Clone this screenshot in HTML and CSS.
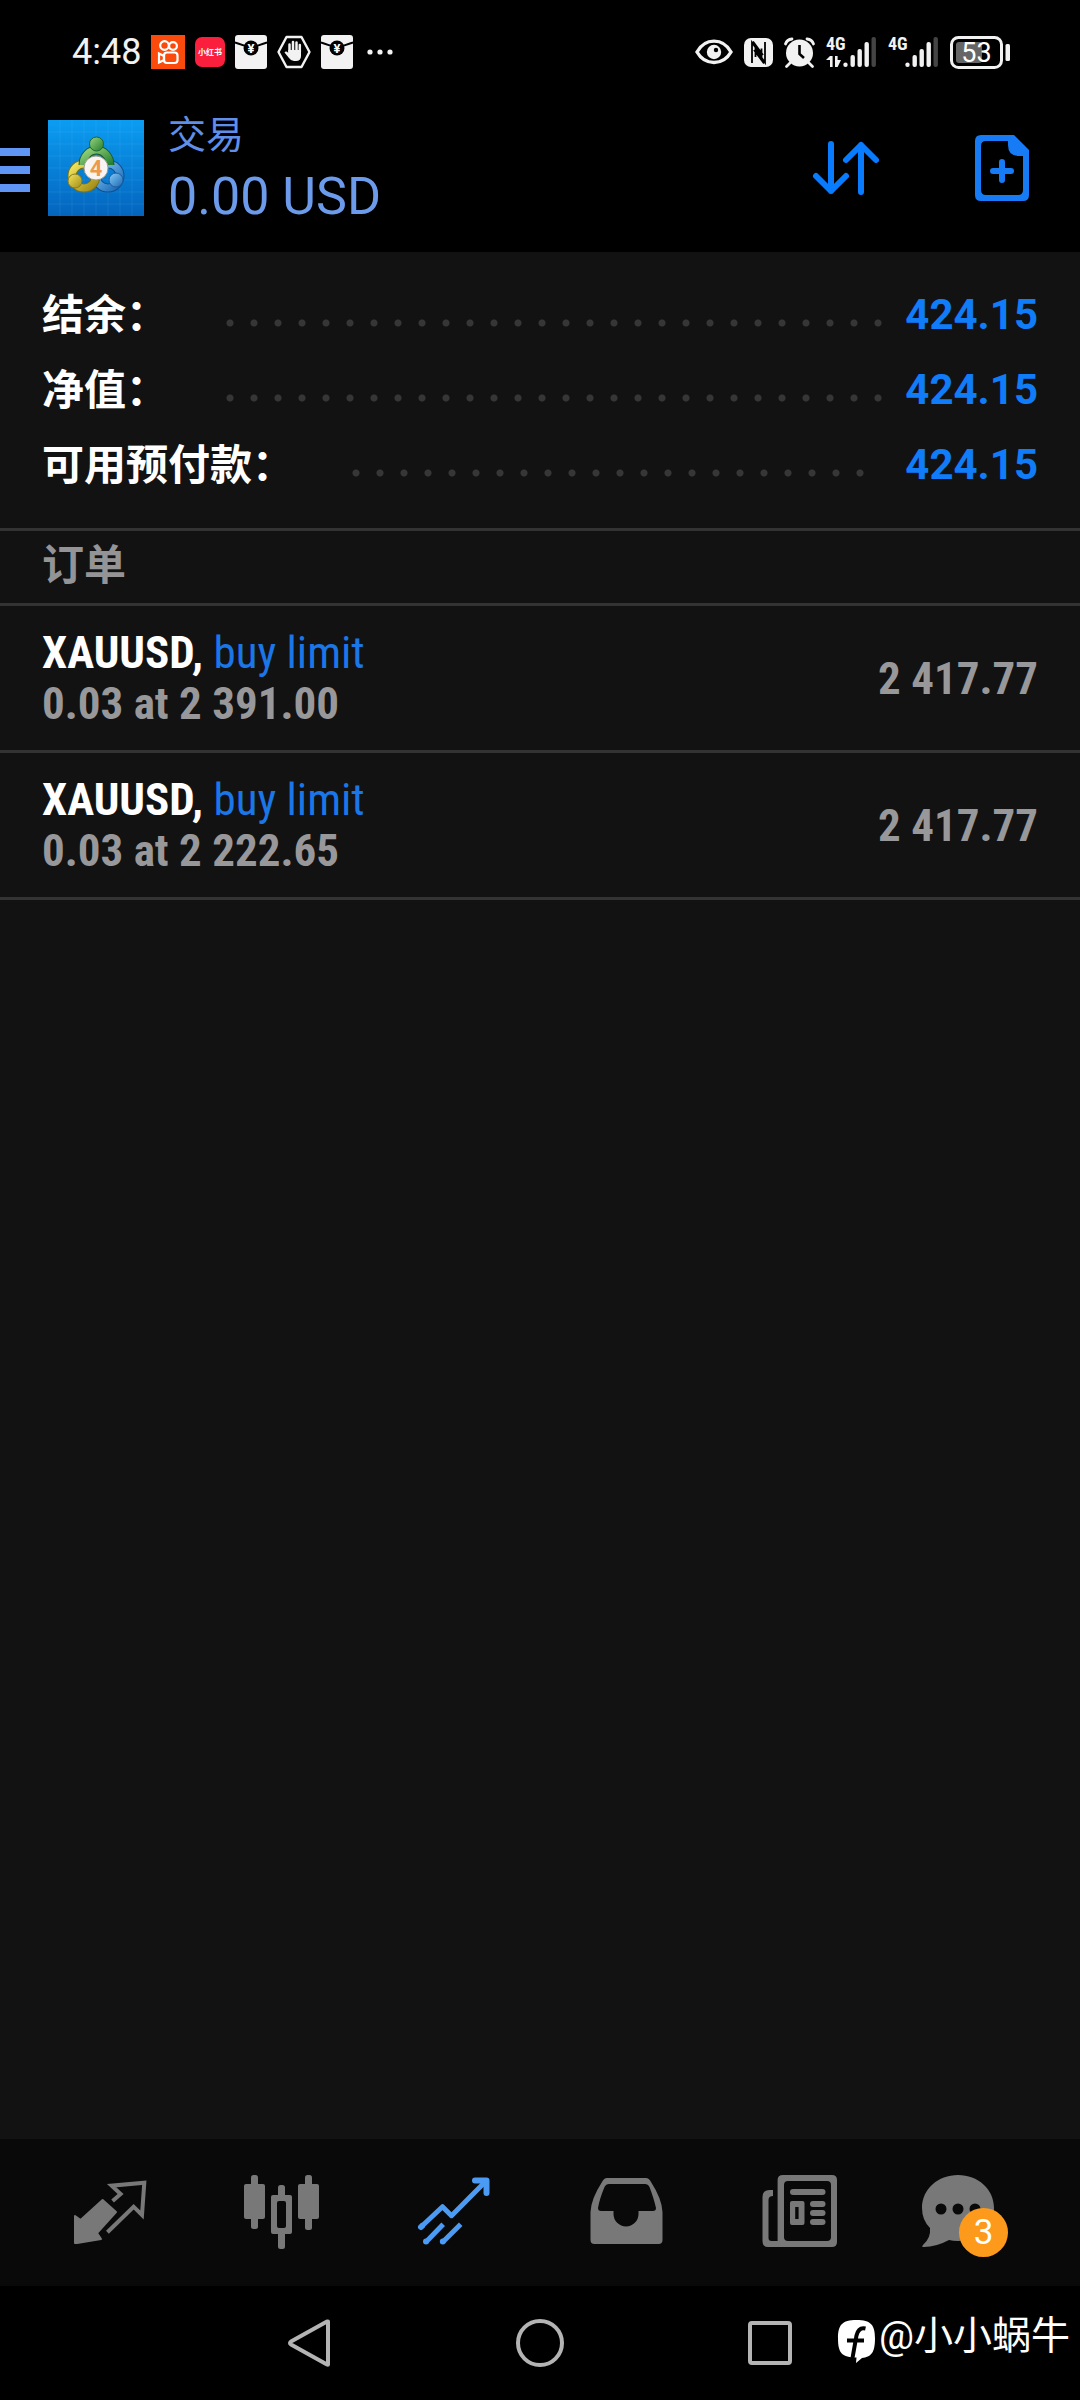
FILE: index.html
```html
<!DOCTYPE html>
<html lang="zh-CN">
<head>
<meta charset="utf-8">
<meta name="viewport" content="width=device-width, initial-scale=1">
<title>交易</title>
<link rel="stylesheet" href="styles.css">
</head>
<body>
<div class="screen">
  <div class="status">
    <div class="status-group">
      <span class="clock">4:48</span>
      <svg width="34" height="34" viewBox="0 0 34 34" aria-hidden="true">
        <rect width="34" height="34" fill="#fa4b0c"/>
        <g fill="none" stroke="#fff" stroke-width="2.2"><circle cx="13.5" cy="10.5" r="4.3"/><circle cx="22" cy="11" r="3.9"/><rect x="13" y="17.5" width="13.5" height="10.5" rx="3"/><path d="M13 21 8 18.500v9L13 25z"/></g>
      </svg>
      <svg width="30" height="30" viewBox="0 0 30 30" aria-hidden="true">
        <rect width="30" height="30" rx="7" fill="#fb1f3e"/>
        <text x="15" y="18" class="tiny-label">小红书</text>
      </svg>
      <svg width="32" height="34" viewBox="0 0 32 34" aria-hidden="true">
        <rect width="32" height="34" rx="3" fill="#f2f2f2"/><path d="M0 7.500C9 10 10 12 16 12s7-2 16-4.500" fill="none" stroke="#000" stroke-width="2"/><circle cx="16" cy="13" r="7.500"/>
        <text x="16" y="18" class="yen">¥</text>
      </svg>
      <svg width="34" height="34" viewBox="0 0 34 34" aria-hidden="true">
        <path d="M9.500 2h15L32.500 17l-8 15h-15L1.500 17z" fill="none" stroke="#f2f2f2" stroke-width="2.400" stroke-linejoin="round"/>
        <path d="M12.500 17V9.500M16 16V7M19.500 16V7.500M22.800 17v-7" stroke="#f2f2f2" stroke-width="2.500" stroke-linecap="round"/>
        <path d="M11.300 15H24v6q0 5-5 5h-2q-3 0-5-3l-4.500-5.500q1.500-2 3.800.5z" fill="#f2f2f2"/>
      </svg>
      <svg width="32" height="34" viewBox="0 0 32 34" aria-hidden="true">
        <rect width="32" height="34" rx="3" fill="#f2f2f2"/><path d="M0 7.500C9 10 10 12 16 12s7-2 16-4.500" fill="none" stroke="#000" stroke-width="2"/><circle cx="16" cy="13" r="7.500"/>
        <text x="16" y="18" class="yen">¥</text>
      </svg>
      <svg width="32" height="34" viewBox="0 0 32 34" fill="#f2f2f2" aria-hidden="true"><circle cx="7" cy="17" r="2.600"/><circle cx="17" cy="17" r="2.600"/><circle cx="27" cy="17" r="2.600"/></svg>
    </div>
    <div class="status-group status-right">
      <svg width="38" height="26" viewBox="0 0 38 26" aria-hidden="true">
        <path d="M2 13C10-1.500 28-1.500 36 13 28 27 10 27 2 13z" fill="none" stroke="#f2f2f2" stroke-width="3.400"/><circle cx="19" cy="13" r="7.200" fill="#f2f2f2"/><circle cx="21" cy="11" r="2.200"/>
      </svg>
      <svg width="29" height="29" viewBox="0 0 29 29" aria-hidden="true">
        <rect width="29" height="29" rx="7" fill="#f2f2f2"/><path d="M8 25V4.500L17.500 18V10.500M9 3.500 19 17M21 4v20.500L11.500 11v8M20 25.500 10 12" fill="none" stroke="#000" stroke-width="1.800"/>
      </svg>
      <svg width="31" height="31" viewBox="0 0 31 31" aria-hidden="true">
        <circle cx="15.500" cy="16" r="13.500" fill="#f2f2f2"/><path d="M1.500 7Q3 2.500 8 2M23 2q5 .5 6.500 5M6 26l-3.500 3.500M25 26l3.500 3.500" fill="none" stroke="#f2f2f2" stroke-width="2.800" stroke-linecap="round"/><path d="M15.500 8v9l4.500 4" fill="none" stroke="#000" stroke-width="2.600"/>
      </svg>
      <svg width="51" height="32" viewBox="0 0 51 32" aria-hidden="true">
        <text x="0" y="14" class="net-label">4G</text>
        <g fill="#f2f2f2"><path d="M4 20h2.600v11H4v-7H0zM9 20h2.600v4H15L11.600 31H9z"/><circle cx="19.500" cy="28.800" r="2.200"/><rect x="24.500" y="19" width="4.400" height="12" rx="2"/><rect x="31.500" y="13" width="4.400" height="18" rx="2"/><rect x="38.500" y="6" width="4.400" height="25" rx="2"/></g><rect x="45.500" y="1" width="4.400" height="30" rx="2" fill="#444"/>
      </svg>
      <svg width="51" height="32" viewBox="0 0 51 32" aria-hidden="true">
        <text x="0" y="14" class="net-label">4G</text>
        <g fill="#f2f2f2"><circle cx="19.500" cy="28.800" r="2.200"/><rect x="24.500" y="19" width="4.400" height="12" rx="2"/><rect x="31.500" y="13" width="4.400" height="18" rx="2"/><rect x="38.500" y="6" width="4.400" height="25" rx="2"/></g><rect x="45.500" y="1" width="4.400" height="30" rx="2" fill="#444"/>
      </svg>
      <svg width="60" height="33" viewBox="0 0 60 33" aria-hidden="true">
        <rect x="1.500" y="1.500" width="50" height="30" rx="7" fill="none" stroke="#f2f2f2" stroke-width="3"/><rect x="6" y="6" width="26" height="21" rx="3" fill="#666"/><rect x="55.500" y="8" width="4.500" height="17" rx="1.500" fill="#f2f2f2"/>
        <text x="26.500" y="26" class="battery-label">53</text>
      </svg>
    </div>
  </div>

  <header class="appbar">
    <button class="plain menu" aria-label="菜单">
      <svg width="30" height="44" viewBox="0 0 30 44" fill="#5f96f5"><path d="M0 0h30v8H0zM0 18h30v8H0zM0 36h30v8H0z"/></svg>
    </button>
    <svg class="logo" width="96" height="96" viewBox="0 0 96 96" aria-hidden="true">
      <defs>
        <linearGradient id="sky" x1="0" y1="0" x2="0" y2="1"><stop offset="0" stop-color="#0b9df2"/><stop offset="1" stop-color="#0464bd"/></linearGradient>
        <linearGradient id="green" x1="0" y1="0" x2="1" y2="1"><stop offset="0" stop-color="#9ad67c"/><stop offset="1" stop-color="#237d32"/></linearGradient>
        <linearGradient id="gold" x1="0" y1="0" x2="1" y2="1"><stop offset="0" stop-color="#f3e65d"/><stop offset="1" stop-color="#a08a16"/></linearGradient>
        <linearGradient id="blue" x1="0" y1="0" x2="1" y2="1"><stop offset="0" stop-color="#8accf7"/><stop offset="1" stop-color="#1767b5"/></linearGradient>
      </defs>
      <rect width="96" height="96" fill="url(#sky)"/>
      <path d="M12 0v96M24 0v96M36 0v96M48 0v96M60 0v96M72 0v96M84 0v96M0 12h96M0 24h96M0 36h96M0 48h96M0 60h96M0 72h96M0 84h96" stroke="#7cc8ff" stroke-opacity=".12"/>
      <g fill="none">
        <circle cx="60" cy="56" r="12" stroke="#10508c" stroke-width="9"/><circle cx="60" cy="56" r="12" stroke="url(#blue)" stroke-width="7"/>
        <circle cx="36" cy="56" r="12" stroke="#75721c" stroke-width="9"/><circle cx="36" cy="56" r="12" stroke="url(#gold)" stroke-width="7"/>
        <path d="M35 45a13.500 15 0 1 1 27 0" stroke="#1c5b2e" stroke-width="9"/><path d="M35 45a13.500 15 0 1 1 27 0" stroke="url(#green)" stroke-width="7"/>
      </g>
      <circle cx="48.500" cy="24" r="7" fill="url(#green)" stroke="#1f6631"/><circle cx="27" cy="61" r="7" fill="url(#gold)" stroke="#857a20"/><circle cx="68" cy="60" r="7" fill="url(#blue)" stroke="#1c5c9c"/>
      <circle cx="48" cy="48" r="12" fill="#f7f4f2" stroke="#9c9c90"/>
      <text x="48" y="56" class="logo-digit">4</text>
    </svg>
    <div class="heading">
      <h1 class="title">交易</h1>
      <div class="profit">0.00 USD</div>
    </div>
    <div class="actions">
      <button class="plain" aria-label="排序">
        <svg width="68" height="56" viewBox="0 0 68 56" fill="none" stroke="#087bff" stroke-width="6" stroke-linecap="round" stroke-linejoin="round"><path d="M19 4v47M4 36l15 15 15-15M49 52V5M34 20 49 5l15 15"/></svg>
      </button>
      <button class="plain" aria-label="新订单">
        <svg width="54" height="66" viewBox="0 0 54 66"><path d="M6 0h33l15 15v45q0 6-6 6H6q-6 0-6-6V6q0-6 6-6z" fill="#167bf5"/><path d="M11 6h22v4q0 11 11 11h4v34q0 5-5 5H11q-5 0-5-5V11q0-5 5-5z" fill="#000"/><path d="M27 27v18M18 36h18" stroke="#167bf5" stroke-width="6" stroke-linecap="round"/></svg>
      </button>
    </div>
  </header>

  <main class="content">
    <dl class="summary">
      <div class="summary-row"><dt>结余：</dt><dd class="leader"><span class="dots"></span></dd><dd class="amount">424.15</dd></div>
      <div class="summary-row"><dt>净值：</dt><dd class="leader"><span class="dots"></span></dd><dd class="amount">424.15</dd></div>
      <div class="summary-row"><dt>可用预付款：</dt><dd class="leader"><span class="dots"></span></dd><dd class="amount">424.15</dd></div>
    </dl>
    <h2 class="section">订单</h2>
    <ul class="orders">
      <li class="order">
        <div class="order-info"><div class="order-name">XAUUSD, <span class="order-type">buy limit</span></div><div class="order-detail">0.03 at 2 391.00</div></div>
        <div class="order-price">2 417.77</div>
      </li>
      <li class="order">
        <div class="order-info"><div class="order-name">XAUUSD, <span class="order-type">buy limit</span></div><div class="order-detail">0.03 at 2 222.65</div></div>
        <div class="order-price">2 417.77</div>
      </li>
    </ul>
  </main>

  <nav class="tabs" aria-label="主导航">
    <button class="plain tab" aria-label="行情">
      <svg class="tab-icon" viewBox="0 0 96 96"><path d="M13 52l5.600 4L40.600 36 54 48 35 69l4 6-24 4h-2z" fill="#787878" stroke="#787878" stroke-width="2" stroke-linejoin="round"/><path d="M50.600 37l8-7-9-8.300 32.700-3L80 51l-8.400-8.300L45.400 68.300" fill="none" stroke="#787878" stroke-width="4"/></svg>
    </button>
    <button class="plain tab" aria-label="图表">
      <svg class="tab-icon" viewBox="0 0 96 96" fill="#787878"><rect x="17" y="11" width="7" height="54" rx="2.500"/><rect x="10" y="20" width="21" height="35" rx="2"/><rect x="44" y="21" width="7" height="64" rx="2.500"/><rect x="37" y="31" width="21" height="39" rx="2"/><rect x="43" y="37" width="9" height="27" rx="2" fill="#090909"/><rect x="71" y="11" width="7" height="55" rx="2.500"/><rect x="64" y="20" width="21" height="35" rx="2"/></svg>
    </button>
    <button class="plain tab" aria-label="交易" aria-current="page">
      <svg class="tab-icon" viewBox="0 0 96 96" fill="none" stroke="#4b9bf5" stroke-width="5"><path d="M16 62 36.500 42.700l9 9L79 18" stroke-linejoin="round"/><path d="M16 62l-1 1M69 16.500h11.500V29" stroke-width="6" stroke-linecap="round" stroke-linejoin="round"/><path d="M20 78 37.200 60.300M36.800 78 54.700 60.300"/><path d="M20 77.500h.01M36.800 77.500h.01" stroke-width="6" stroke-linecap="round"/></svg>
    </button>
    <button class="plain tab" aria-label="历史">
      <svg class="tab-icon" viewBox="0 0 96 96"><path fill-rule="evenodd" fill="#787878" d="M29 14h39q3 0 5 4 11 17 11.500 30v28q0 4-4 4h-64q-4 0-4-4V48Q13 35 24 18q2-4 5-4zM31 20q-3 0-4.500 3-5 12-6.500 21 0 3 3 3h12.500v3a12.500 12.500 0 0 0 25 0v-3H75q3 0 3-3-2-9-6.500-21-1.500-3-4.500-3z"/></svg>
    </button>
    <button class="plain tab" aria-label="新闻">
      <svg class="tab-icon" viewBox="0 0 96 96" fill="#787878"><path fill-rule="evenodd" d="M33 11h49q5 0 5 5v62q0 5-5 5H18q-5.500 0-5.500-6V33q0-7 7-7h3.500v6q-4.500 0-4.500 4v38q0 3 3 3h6.100V16q0-5 5.400-5zM38 17q-4 0-4 4v52q0 4 4 4h39q4 0 4-4V21q0-4-4-4z"/><rect x="40" y="25" width="35.500" height="6" rx="3"/><path fill-rule="evenodd" d="M42 37h10.500q2 0 2 2v20q0 2-2 2H42q-2 0-2-2V39q0-2 2-2zm3.200 6v12h3.400V43z"/><rect x="60" y="37" width="15.500" height="6" rx="3"/><rect x="60" y="46" width="15.500" height="6" rx="3"/><rect x="60" y="55" width="15.500" height="6" rx="3"/></svg>
    </button>
    <button class="plain tab" aria-label="消息">
      <span class="badge-anchor">
        <svg class="tab-icon" viewBox="0 0 96 96"><path d="M36 11c20 0 36 14 36 33S56 77 36 77q-5 0-9-1Q14 83 2 83q-3 0-1-2 8-7 7-17Q0 56 0 44C0 25 16 11 36 11z" fill="#787878"/><g fill="#090909"><circle cx="19" cy="45" r="5.500"/><circle cx="36" cy="45" r="5.500"/><circle cx="53" cy="45" r="5.500"/></g></svg>
        <span class="badge">3</span>
      </span>
    </button>
  </nav>

  <div class="system">
    <button class="plain" aria-label="返回"><svg width="50" height="50" viewBox="0 0 50 50" class="sys-icon"><path d="M43 3.500v43Q43 47 42 46.500L6 26.500Q4 25 6 23.500L42 3.500z"/></svg></button>
    <button class="plain" aria-label="主屏幕"><svg width="50" height="50" viewBox="0 0 50 50" class="sys-icon"><circle cx="25" cy="25" r="22"/></svg></button>
    <button class="plain" aria-label="最近任务"><svg width="50" height="50" viewBox="0 0 50 50" class="sys-icon"><rect x="5" y="5" width="40" height="40" rx="2"/></svg></button>
    <div class="watermark">
      <svg width="37" height="43" viewBox="0 0 37 43" aria-hidden="true"><path d="M18.500 0C33 0 37 5 37 18.500 37 33 33 37 24 38l-6 5 .5-5.500C4 37.500 0 33 0 18.500 0 5 4 0 18.500 0z" fill="#fff"/><path d="M27.500 8.500q-7-1.500-9 7L14.500 38M9 20.500h17" fill="none" stroke="#000" stroke-width="4"/></svg>
      <span>@小小蜗牛</span>
    </div>
  </div>
</div>
</body>
</html>
```
FILE: styles.css
```css
* { box-sizing: border-box; }

body {
  margin: 0;
  background: #000;
  color: #fff;
  font-family: Roboto, "Noto Sans CJK SC", sans-serif;
}

h1, h2, dl, dd, ul { margin: 0; padding: 0; }
svg { display: block; flex: none; overflow: visible; }

.plain {
  display: block;
  padding: 0;
  border: 0;
  background: none;
  color: inherit;
  font: inherit;
}

.screen {
  display: flex;
  flex-direction: column;
  min-height: 100vh;
}

/* Status bar */
.status {
  display: flex;
  align-items: center;
  justify-content: space-between;
  height: 84px;
  padding: 20px 70px 0 72px;
}
.status-group { display: flex; align-items: center; gap: 10px; }
.status-right { gap: 11px; }
.clock { font-size: 36px; line-height: 40px; color: #f2f2f2; }
.tiny-label {
  font: 700 8px "Noto Sans CJK SC", sans-serif;
  fill: #fff;
  text-anchor: middle;
}
.yen { font: 700 13px Roboto, sans-serif; fill: #fff; text-anchor: middle; }
.net-label { font: 700 18px "Roboto Condensed", "Liberation Sans Narrow", sans-serif; fill: #f2f2f2; }
.battery-label { font: 400 27px Roboto, sans-serif; fill: #fff; text-anchor: middle; }

/* App bar */
.appbar {
  display: flex;
  align-items: center;
  height: 168px;
  padding-right: 51px;
}
.menu { padding-top: 4px; }
.logo { margin: 0 24px 0 18px; }
.logo-digit { font: 700 22px Roboto, sans-serif; fill: #ee9a4d; text-anchor: middle; }
.heading { flex: 1; color: #6b9bea; }
.title { font-size: 38px; font-weight: 400; line-height: 50px; color: #5f8fe8; }
.profit { margin-top: 7px; font-size: 52px; line-height: 60px; }
.actions { display: flex; align-items: center; gap: 95px; }

/* Account summary */
.content { flex: 1; background: #121212; }
.summary { padding: 24px 42px 27px; border-bottom: 3px solid #333; }
.summary-row {
  display: flex;
  align-items: center;
  height: 75px;
  font-size: 42px;
  font-weight: 700;
  line-height: 72px;
}
.summary dt { padding-bottom: 3px; font-family: "Noto Sans CJK SC", sans-serif; }
.leader { flex: 1; margin: 0 14px 0 50px; }
.dots {
  display: block;
  width: round(down, 100%, 24px);
  height: 8px;
  margin-top: 18px;
  background: radial-gradient(circle, #363636 3px, transparent 4px) 0 0 / 24px 8px repeat-x;
}
.amount { padding-top: 3px; color: #107cf8; }

/* Orders */
.section {
  height: 75px;
  padding: 0 42px;
  border-bottom: 3px solid #333;
  color: #949496;
  font: 700 42px/62px "Noto Sans CJK SC", sans-serif;
}
.orders { list-style: none; }
.order {
  display: flex;
  align-items: center;
  justify-content: space-between;
  height: 147px;
  padding: 0 42px;
  border-bottom: 3px solid #333;
  font: 700 45px/51px "Roboto Condensed", "Liberation Sans Narrow", sans-serif;
}
.order-type { color: #1b76e8; font-weight: 400; }
.order-detail, .order-price { color: #98989b; }

/* Tabs */
.tabs {
  display: flex;
  align-items: center;
  height: 147px;
  padding: 0 24px 2px;
  background: #090909;
}
.tab { display: flex; flex: 1; justify-content: center; }
.tab-icon { width: 96px; height: 96px; }
.badge-anchor { position: relative; }
.badge {
  position: absolute;
  left: 37px;
  top: 44px;
  width: 49px;
  height: 49px;
  border-radius: 50%;
  background: #fd9a1c;
  color: #fff;
  font-size: 35px;
  line-height: 49px;
  text-align: center;
}

/* System navigation */
.system {
  position: relative;
  display: flex;
  align-items: center;
  justify-content: center;
  gap: 180px;
  height: 114px;
}
.sys-icon { fill: none; stroke: #b4b4b4; stroke-width: 4; stroke-linejoin: round; }
.watermark {
  position: absolute;
  right: 10px;
  top: 24px;
  display: flex;
  align-items: flex-start;
  gap: 4px;
  font: 400 39px/52px Roboto, "Noto Sans CJK SC", sans-serif;
}
.watermark svg { margin-top: 10px; }
```
